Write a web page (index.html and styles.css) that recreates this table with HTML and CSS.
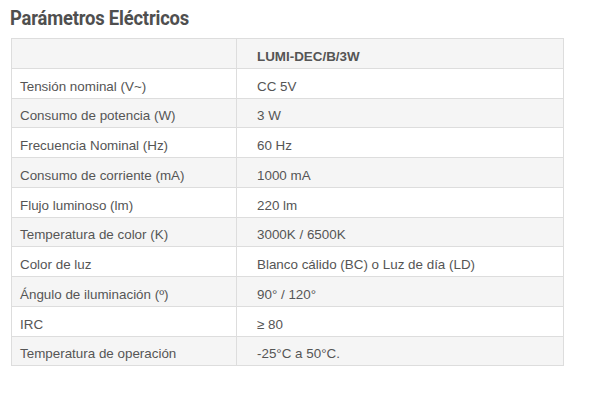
FILE: index.html
```html
<!DOCTYPE html>
<html lang="es">
<head>
<meta charset="utf-8">
<title>Parámetros Eléctricos</title>
<link rel="stylesheet" href="styles.css">
</head>
<body>
<section class="specs">
  <h2 class="specs-title"><span class="specs-title-text">Parámetros Eléctricos</span></h2>
  <table class="specs-table">
    <thead>
      <tr><th></th><th>LUMI-DEC/B/3W</th></tr>
    </thead>
    <tbody>
      <tr><td>Tensión nominal (V~)</td><td>CC 5V</td></tr>
      <tr><td>Consumo de potencia (W)</td><td>3 W</td></tr>
      <tr><td>Frecuencia Nominal (Hz)</td><td>60 Hz</td></tr>
      <tr><td>Consumo de corriente (mA)</td><td>1000 mA</td></tr>
      <tr><td>Flujo luminoso (lm)</td><td>220 lm</td></tr>
      <tr><td>Temperatura de color (K)</td><td>3000K / 6500K</td></tr>
      <tr><td>Color de luz</td><td>Blanco cálido (BC) o Luz de día (LD)</td></tr>
      <tr><td>Ángulo de iluminación (º)</td><td>90° / 120°</td></tr>
      <tr><td>IRC</td><td>≥ 80</td></tr>
      <tr><td>Temperatura de operación</td><td>-25°C a 50°C.</td></tr>
    </tbody>
  </table>
</section>
</body>
</html>
```
FILE: styles.css
```css
html, body {
  margin: 0;
  padding: 0;
  background: #ffffff;
}
body {
  font-family: "Liberation Sans", Arial, sans-serif;
  color: #555555;
}
.specs {
  padding: 7px 0 0 10px;
  width: 553px;
}
.specs-title {
  margin: 0 0 8px 0;
  font-family: "Roboto", "Liberation Sans", sans-serif;
  font-weight: 700;
  font-size: 20px;
  line-height: 23px;
  color: #4f4f4f;
  letter-spacing: -0.2px;
}
.specs-title-text {
  display: inline-block;
  transform: scaleX(0.92);
  transform-origin: left center;
}
.specs-table {
  margin-left: 1px;
  width: 553px;
  border-collapse: collapse;
  font-size: 13.4px;
  border: 1px solid #dddddd;
}
.specs-table th,
.specs-table td {
  border: 1px solid #dddddd;
  height: 21.75px;
  padding: 7px 8px 0 8px;
  text-align: left;
  vertical-align: middle;
  line-height: 16px;
}
.specs-table th:first-child,
.specs-table td:first-child {
  width: 208px;
}
.specs-table th + th,
.specs-table td + td {
  padding-left: 20px;
}
.specs-table th {
  font-weight: 700;
  color: #555555;
  background: #f5f5f5;
}
.specs-table tbody tr:nth-child(even) td {
  background: #f5f5f5;
}
.specs-table tbody tr:nth-child(odd) td {
  background: #ffffff;
}
```
